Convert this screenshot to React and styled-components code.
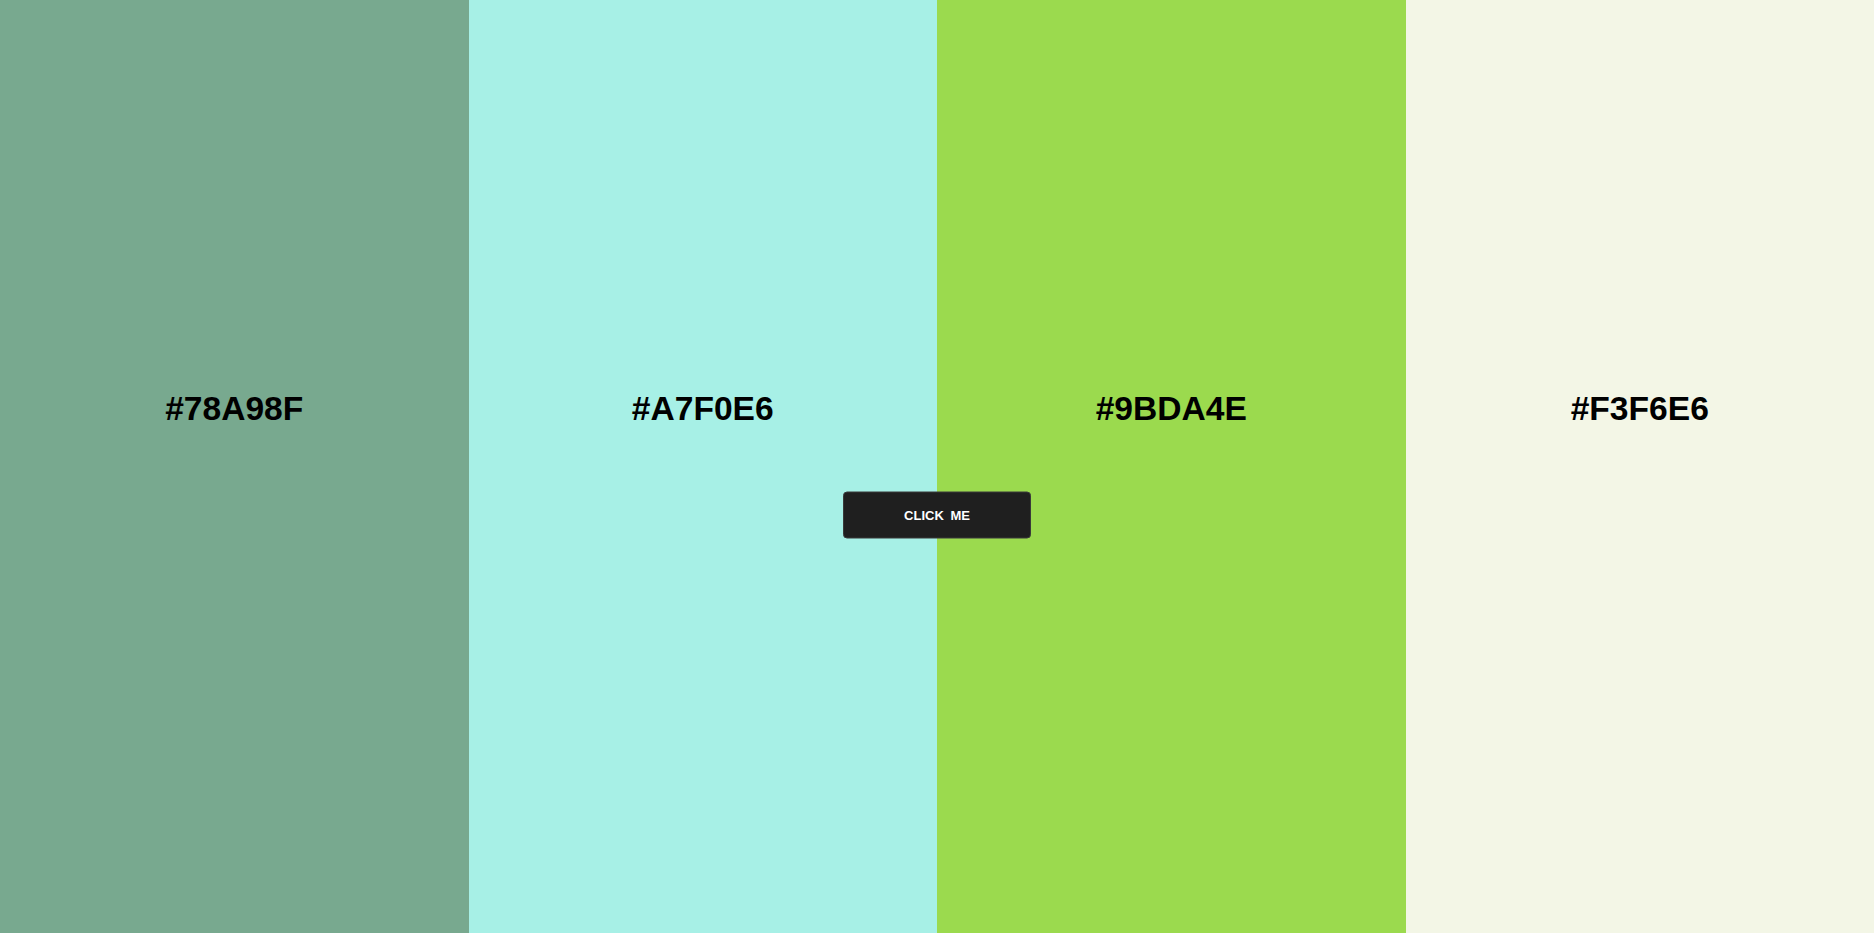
import React, { useState } from 'react';
import styled, { createGlobalStyle } from 'styled-components';

const GlobalStyle = createGlobalStyle`
  * {
    box-sizing: border-box;
  }

  body {
    margin: 0;
    font-family: "Liberation Sans", Arial, sans-serif;
  }
`;

const initialColors = ["#78A98F", "#A7F0E6", "#9BDA4E", "#F3F6E6"];

const randomHex = () =>
  "#" +
  Math.floor(Math.random() * 0xffffff)
    .toString(16)
    .padStart(6, "0")
    .toUpperCase();

const App = () => {
  const [colors, setColors] = useState(initialColors);

  const generate = () => {
    setColors(colors.map(() => randomHex()));
  };

  return (
    <>
      <GlobalStyle />
      <Page>
        {colors.map((color, i) => (
          <Column key={i} color={color}>
            <Hex>{color}</Hex>
          </Column>
        ))}

        <Button onClick={generate}>CLICK ME</Button>
      </Page>
    </>
  );
};

export default App;

const Page = styled.div`
  position: relative;
  display: flex;
  width: 100%;
  height: 100vh;
`;

const Column = styled.div`
  flex: 1;
  display: flex;
  align-items: center;
  justify-content: center;
  padding-bottom: 116px;
  background-color: ${(props) => props.color};
`;

const Hex = styled.h2`
  margin: 0;
  font-size: 33.6px;
  font-weight: 700;
  color: #000;
`;

const Button = styled.button`
  position: absolute;
  top: calc(50% + 48px);
  left: 50%;
  transform: translate(-50%, -50%);
  width: 188px;
  height: 47px;
  border: 1px solid #3a3a3a;
  border-radius: 4px;
  background: #1f1f1f;
  color: #fff;
  font-family: "Liberation Sans", Arial, sans-serif;
  font-size: 13px;
  font-weight: 600;
  word-spacing: 3px;
  cursor: pointer;
`;
